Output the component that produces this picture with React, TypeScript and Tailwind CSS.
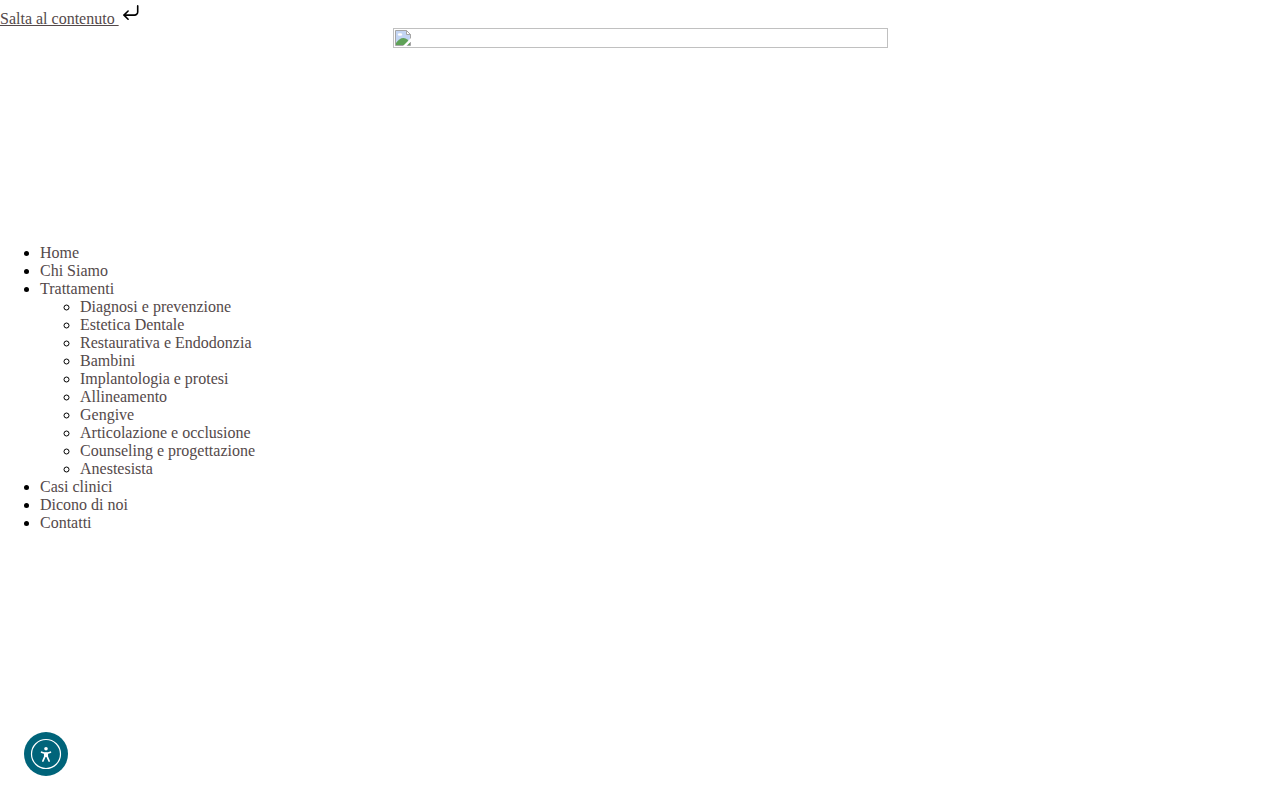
const treatments = [
  'Diagnosi e prevenzione',
  'Estetica Dentale',
  'Restaurativa e Endodonzia',
  'Bambini',
  'Implantologia e protesi',
  'Allineamento',
  'Gengive',
  'Articolazione e occlusione',
  'Counseling e progettazione',
  'Anestesista',
];

const menu: { label: string; children?: string[] }[] = [
  { label: 'Home' },
  { label: 'Chi Siamo' },
  { label: 'Trattamenti', children: treatments },
  { label: 'Casi clinici' },
  { label: 'Dicono di noi' },
  { label: 'Contatti' },
];

function ReturnIcon() {
  return (
    <svg className="ml-[3px] mt-[3px] h-5 w-5" viewBox="0 0 20 20" fill="none" stroke="#000" strokeWidth="1.6" strokeLinecap="round" strokeLinejoin="round">
      <path d="M15.700 2.900v6a3.200 3.200 0 0 1-3.200 3.200H2.200" />
      <path d="M6.100 8 2 12.100l4.100 4.100" />
    </svg>
  );
}

function BrokenImageIcon() {
  return (
    <svg className="h-4 w-4" viewBox="0 0 16 16">
      <path d="M0.500 0.500h11l4 4v11h-15z" fill="#c3d5f3" stroke="#a5a5a5" />
      <path d="M11.500 0.500v4h4z" fill="#fff" stroke="#a5a5a5" />
      <ellipse cx="5" cy="4.500" rx="2.300" ry="1.300" fill="#fff" />
      <path d="M1 13C3 10 5.500 8 8.500 8c3 0 5 2.500 6.500 5v2H1z" fill="#5fa257" />
      <path d="M8 16 16 8v3.500L11.500 16z" fill="#fff" />
    </svg>
  );
}

function AccessibilityIcon() {
  return (
    <svg className="h-11 w-11" viewBox="0 0 44 44">
      <circle cx="22" cy="22" r="22" fill="#00647a" />
      <circle cx="22" cy="22" r="14.500" fill="none" stroke="#fff" strokeWidth="1.200" />
      <circle cx="22" cy="16.800" r="1.800" fill="#fff" />
      <path d="M17.600 20.200 20.700 21.200h2.600l3.100-1M20.800 21.500v3.200l-1.900 4.300M23.200 21.500v3.200l1.900 4.300" fill="none" stroke="#fff" strokeWidth="1.700" strokeLinecap="round" strokeLinejoin="round" />
      <path d="M20.300 20.700h3.400v4.300h-3.400z" fill="#fff" />
    </svg>
  );
}

export default function App() {
  return (
    <div className="min-h-screen bg-white font-['Liberation_Serif',serif] text-base leading-[18px] text-black">
      <div className="flex h-7 items-start">
        <a href="#contenuto" className="mt-[10px] whitespace-pre text-[#54494a] underline">Salta al contenuto </a>
        <ReturnIcon />
      </div>
      <header className="flex h-[216px] items-start justify-center">
        <div className="h-5 w-[495px] border border-[#c0c0c0] p-px">
          <BrokenImageIcon />
        </div>
      </header>
      <nav id="contenuto">
        <ul className="list-disc pl-10">
          {menu.map((item) => (
            <li key={item.label}>
              <a href="#" className="text-[#54494a]">{item.label}</a>
              {item.children && (
                <ul className="list-[circle] pl-10">
                  {item.children.map((child) => (
                    <li key={child}>
                      <a href="#" className="text-[#54494a]">{child}</a>
                    </li>
                  ))}
                </ul>
              )}
            </li>
          ))}
        </ul>
      </nav>
      <button aria-label="Accessibilità" className="fixed bottom-6 left-6 h-11 w-11">
        <AccessibilityIcon />
      </button>
    </div>
  );
}
